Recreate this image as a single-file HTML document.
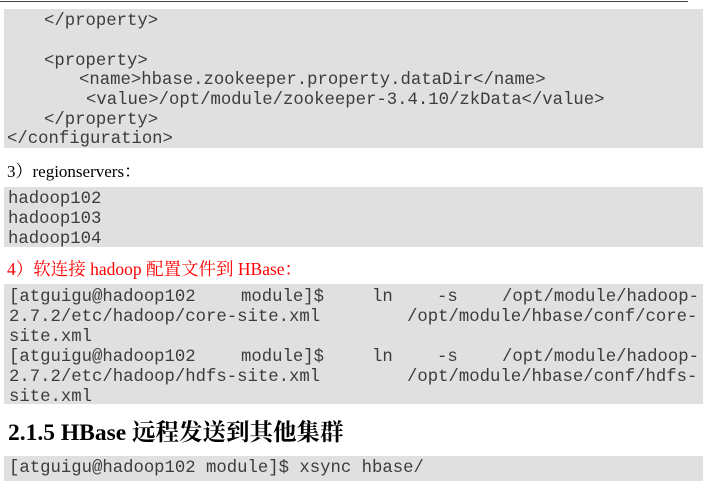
<!DOCTYPE html>
<html><head><meta charset="utf-8"><style>
body{margin:0;width:707px;height:481px;background:#fff;position:relative;overflow:hidden}
.b{position:absolute;left:4px;width:699px;background:#e0e0e0}
.m{position:absolute;font-family:"Liberation Mono",monospace;font-size:17.3px;color:#3c3c3c;white-space:pre;line-height:20px;margin-top:3px}
.t{position:absolute;font-family:"Liberation Serif","Noto Serif CJK SC",serif;white-space:pre}
</style></head><body>
<div style="position:absolute;left:0;top:1px;width:688px;height:1px;background:#444"></div>
<div class="b" style="top:9px;height:139px"></div>
<div class="m" style="left:44px;top:9px">&lt;/property&gt;</div>
<div class="m" style="left:44px;top:49px">&lt;property&gt;</div>
<div class="m" style="left:79px;top:68px">&lt;name&gt;hbase.zookeeper.property.dataDir&lt;/name&gt;</div>
<div class="m" style="left:86px;top:88px">&lt;value&gt;/opt/module/zookeeper-3.4.10/zkData&lt;/value&gt;</div>
<div class="m" style="left:44px;top:108px">&lt;/property&gt;</div>
<div class="m" style="left:7px;top:127px">&lt;/configuration&gt;</div>
<div class="t" style="left:7px;top:157px;font-size:17px;color:#000">3）regionservers：</div>
<div class="b" style="top:187px;height:60px"></div>
<div class="m" style="left:8px;top:187px">hadoop102
hadoop103
hadoop104</div>
<div class="t" style="left:7px;top:256px;font-size:17.5px;color:#f00">4）软连接 hadoop 配置文件到 HBase：</div>
<div class="b" style="top:284px;height:120px"></div>
<div class="m" style="left:9px;top:285px">[atguigu@hadoop102</div>
<div class="m" style="left:241px;top:285px">module]$</div>
<div class="m" style="left:372px;top:285px">ln</div>
<div class="m" style="left:437px;top:285px">-s</div>
<div class="m" style="left:502px;top:285px">/opt/module/hadoop-</div>
<div class="m" style="left:9px;top:305px">2.7.2/etc/hadoop/core-site.xml</div>
<div class="m" style="left:407px;top:305px">/opt/module/hbase/conf/core-</div>
<div class="m" style="left:9px;top:325px">site.xml</div>
<div class="m" style="left:9px;top:345px">[atguigu@hadoop102</div>
<div class="m" style="left:241px;top:345px">module]$</div>
<div class="m" style="left:372px;top:345px">ln</div>
<div class="m" style="left:437px;top:345px">-s</div>
<div class="m" style="left:502px;top:345px">/opt/module/hadoop-</div>
<div class="m" style="left:9px;top:365px">2.7.2/etc/hadoop/hdfs-site.xml</div>
<div class="m" style="left:407px;top:365px">/opt/module/hbase/conf/hdfs-</div>
<div class="m" style="left:9px;top:385px">site.xml</div>
<div class="t" style="left:8px;top:413px;font-size:23.5px;font-weight:bold;color:#000">2.1.5 HBase 远程发送到其他集群</div>
<div class="b" style="top:456px;height:25px"></div>
<div class="m" style="left:9px;top:456px">[atguigu@hadoop102 module]$ xsync hbase/</div>
</body></html>
